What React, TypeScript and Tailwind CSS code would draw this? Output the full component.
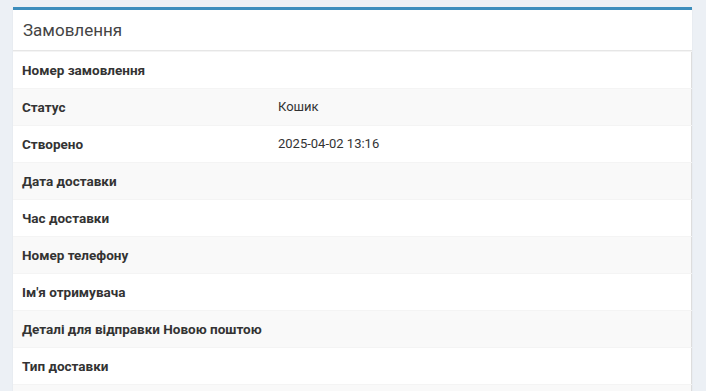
const rows: [string, string][] = [
  ["Номер замовлення", ""],
  ["Статус", "Кошик"],
  ["Створено", "2025-04-02 13:16"],
  ["Дата доставки", ""],
  ["Час доставки", ""],
  ["Номер телефону", ""],
  ["Ім'я отримувача", ""],
  ["Деталі для відправки Новою поштою", ""],
  ["Тип доставки", ""],
  ["", ""],
];

export default function App() {
  return (
    <div className="h-[391px] w-[706px] overflow-hidden bg-[#ecf0f5] pl-[13px] pr-[14px] pt-[7px] font-['Roboto',sans-serif] text-[#333]">
      <div className="border-t-[3px] border-[#3c8dbc] bg-white shadow-[0_1px_1px_rgba(0,0,0,0.1)]">
        <div className="border-b border-[#e6e6e6] px-[10px] py-[8px]">
          <h3 className="text-[17px] leading-[24px] text-[#444]">Замовлення</h3>
        </div>
        <table className="w-full border-collapse border-r border-[#ddd]">
          <tbody>
            {rows.map(([label, value], i) => (
              <tr key={i} className={i % 2 === 1 ? "bg-[#f9f9f9]" : "bg-white"}>
                <th className="h-[37px] w-[256px] whitespace-nowrap border-t border-[#f4f4f4] pl-[9px] pr-[6px] text-left align-middle text-[13.5px] font-bold">
                  {label}
                </th>
                <td className="h-[37px] border-t border-[#f4f4f4] px-[9px] align-middle text-[13px]">{value}</td>
              </tr>
            ))}
          </tbody>
        </table>
      </div>
    </div>
  );
}
